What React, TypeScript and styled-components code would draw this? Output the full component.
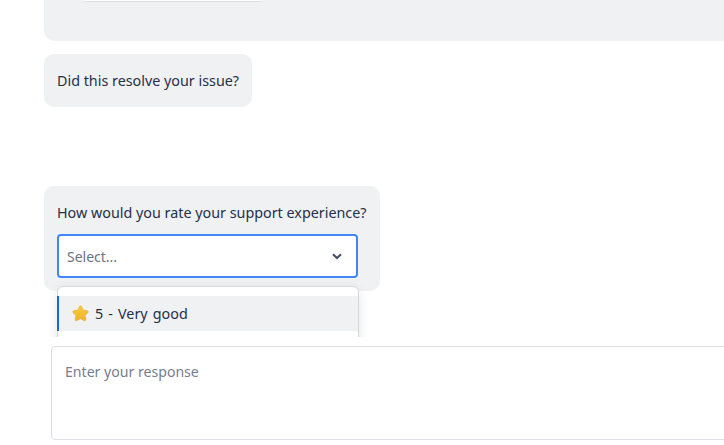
import React from "react";
import styled, { createGlobalStyle } from "styled-components";

const Global = createGlobalStyle`
  html, body { margin: 0; padding: 0; background: #fff; overflow: hidden; }
  body { font-family: "Noto Sans", "Open Sans", sans-serif; color: #252f4c; }
`;

const Page = styled.div`
  width: 724px;
  height: 445px;
  display: flex;
  flex-direction: column;
  overflow: hidden;
`;

const Messages = styled.div`
  height: 337px;
  flex: none;
  overflow: hidden;
  padding-left: 44px;
  display: flex;
  flex-direction: column;
  align-items: flex-start;
`;

const Bubble = styled.div<{ $gap: number }>`
  position: relative;
  flex: none;
  box-sizing: border-box;
  background: #f0f1f3;
  border-radius: 10px;
  padding: 13px;
  margin-bottom: ${(p) => p.$gap}px;
  font-size: 14.33px;
  line-height: 27px;
`;

const CutBubble = styled.div`
  flex: none;
  box-sizing: border-box;
  width: 720px;
  height: 41px;
  padding-left: 39px;
  margin-bottom: 13px;
  background: #f0f1f3;
  border-radius: 0 0 0 10px;
`;

const CutCard = styled.div`
  width: 179px;
  height: 2px;
  box-sizing: border-box;
  background: #fff;
  border-bottom: 1px solid #dcdde3;
  border-radius: 0 0 5px 5px;
`;

const Select = styled.div`
  box-sizing: border-box;
  width: 301px;
  height: 44px;
  margin-top: 8px;
  padding: 0 14px 0 8px;
  display: flex;
  align-items: center;
  justify-content: space-between;
  background: #fff;
  border: 2px solid #4086f7;
  border-radius: 4px;
  color: #6b7280;
  font-size: 14px;
`;

const Menu = styled.div`
  position: absolute;
  top: 100px;
  left: 13px;
  box-sizing: border-box;
  width: 302px;
  height: 120px;
  padding-top: 9px;
  background: #fff;
  border: 1px solid #d6d7db;
  border-radius: 6px;
  box-shadow: 0 4px 12px rgba(0, 0, 0, 0.1);
`;

const Option = styled.div`
  height: 35px;
  box-sizing: border-box;
  margin-left: -1px;
  padding-left: 13px;
  display: flex;
  align-items: center;
  gap: 6px;
  background: #f0f1f3;
  border-left: 2px solid #1667e0;
  word-spacing: 1.4px;
`;

const Composer = styled.div`
  flex: none;
  margin: 9px 0 0 51px;
`;

const Response = styled.textarea`
  display: block;
  box-sizing: border-box;
  width: 720px;
  height: 94px;
  padding: 13px;
  border: 1px solid #dedfe6;
  border-radius: 4px;
  outline: none;
  resize: none;
  background: #fff;
  font: 14.1px/24px "Noto Sans", "Open Sans", sans-serif;
  &::placeholder { color: #76808f; opacity: 1; }
`;

const Star = () => (
  <svg width="17" height="17" viewBox="0 0 17 17" aria-hidden="true">
    <defs>
      <linearGradient id="starFill" x1="0" y1="0" x2="0" y2="1">
        <stop offset="0" stopColor="#f7cb3d" />
        <stop offset="1" stopColor="#eeb32a" />
      </linearGradient>
    </defs>
    <path
      d="M8.5.8c.6 0 1 .4 1.3 1l1.6 3.3 3.7.5c1.2.2 1.7 1.4.8 2.2l-2.7 2.6.7 3.8c.2 1.2-1 2-2 1.4l-3.4-1.8-3.4 1.8c-1 .6-2.2-.2-2-1.4l.7-3.8L1.1 7.8C.2 7 .7 5.8 1.9 5.6l3.7-.5 1.6-3.3c.3-.6.7-1 1.3-1z"
      fill="url(#starFill)"
      stroke="#e3a526"
      strokeWidth="0.4"
    />
  </svg>
);

const Chevron = () => (
  <svg width="10" height="7" viewBox="0 0 10 7" aria-hidden="true">
    <path d="M1 1.3 5 5l4-3.7" fill="none" stroke="#444f66" strokeWidth="2.1" />
  </svg>
);

export default function App() {
  return (
    <Page>
      <Global />
      <Messages>
        <CutBubble>
          <CutCard />
        </CutBubble>
        <Bubble $gap={79}>Did this resolve your issue?</Bubble>
        <Bubble $gap={0}>
          How would you rate your support experience?
          <Select>
            Select...
            <Chevron />
          </Select>
          <Menu>
            <Option>
              <Star />5 - Very good
            </Option>
          </Menu>
        </Bubble>
      </Messages>
      <Composer>
        <Response placeholder="Enter your response" />
      </Composer>
    </Page>
  );
}
